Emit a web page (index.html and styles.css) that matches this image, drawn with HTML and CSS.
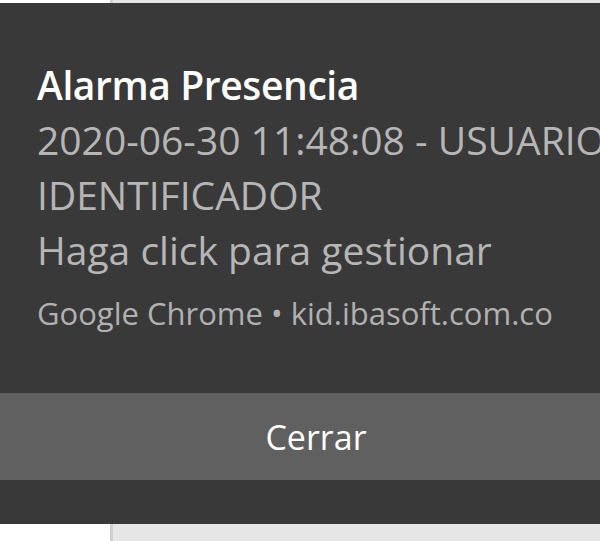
FILE: index.html
```html
<!DOCTYPE html>
<html lang="es">
  <head>
    <meta charset="UTF-8" />
    <title>Alarma Presencia</title>
    <link rel="stylesheet" href="styles.css">
  </head>
  <body>
    <div class="toast">
      <div class="toast-body">
        <h5 class="t-title">Alarma Presencia</h5>
        <p class="t-text">2020-06-30 11:48:08 - USUARIO IDENTIFICADOR</p>
        <p class="t-text">Haga click para gestionar</p>
        <p class="t-source">Google Chrome • kid.ibasoft.com.co</p>
      </div>
      <div class="t-actions"><a href="javascript:void (0);">Cerrar</a></div>
    </div>
  </body>
</html>
```

FILE: styles.css
```css
* {
  margin: 0;
  padding: 0;
  border: 0;
  text-decoration: none;
}
html,
body {
  height: 100%;
  overflow: hidden;
}
body {
  font-family: 'Open Sans', 'Noto Sans', sans-serif;
  background: linear-gradient(to right, #fff 0, #fff 110px, #cfcfcf 110px, #cfcfcf 113px, #e6e6e6 113px);
}
.toast {
  margin-top: 3px;
  height: 521px;
  overflow: hidden;
  background-color: #393939;
  display: flex;
  flex-direction: column;
}
.toast-body {
  padding: 53.5px 0 0 37px;
  height: 333.5px;
  box-sizing: border-box;
}
.t-title {
  font-size: 39px;
  font-weight: 600;
  letter-spacing: -0.4px;
  line-height: 55px;
  color: #fff;
}
.t-text {
  font-size: 39px;
  line-height: 55px;
  color: #b6b6b6;
  width: 600px;
  white-space: normal;
}
.t-source {
  margin-top: 16.5px;
  font-size: 31px;
  line-height: 40px;
  color: #b1b1b1;
  white-space: nowrap;
}
.t-actions {
  margin-top: 56.5px;
  height: 87px;
  background-color: #606060;
  display: flex;
  align-items: center;
  justify-content: center;
}
.t-actions a {
  font-size: 34px;
  color: #fff;
  padding-left: 32px;
}
```
